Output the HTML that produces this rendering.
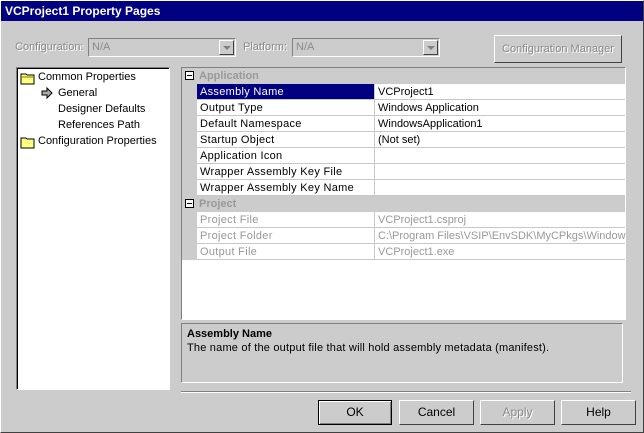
<!DOCTYPE html>
<html><head><style>
*{margin:0;padding:0;box-sizing:border-box}
body{width:644px;height:433px;background:#cccccc;font-family:"Liberation Sans",sans-serif;font-size:11px;position:relative;overflow:hidden;border:1px solid #fff;border-right-color:#404040;border-bottom-color:#404040}
.a{position:absolute}
.title{left:0;top:0;width:642px;height:20px;background:#000080;color:#fff;font-weight:bold;font-size:12px;line-height:20px;padding-left:4px}
.dis{color:#8a8a8a;text-shadow:1px 1px 0 #fff}
.combo{height:19px;border:1px solid;border-color:#808080 #fff #fff #808080;background:#cccccc;color:#8a8a8a;padding-left:3px;line-height:17px}
.combo i{position:absolute;right:1px;top:1px;width:15px;height:15px;border:1px solid;border-color:#fff #404040 #404040 #fff;background:#ccc}
.combo i:after{content:"";position:absolute;left:3px;top:5px;border:4px solid transparent;border-top:4px solid #808080;border-bottom:0}
.btn{height:25px;border:1px solid;border-color:#fff #404040 #404040 #fff;text-align:center;line-height:23px;font-size:12px}
.sunk{border:1px solid;border-color:#808080 #fff #fff #808080;background:#fff}
.row{position:absolute;left:15px;width:428px;height:16px;border-bottom:1px solid #c8c8c8;line-height:16px}
.row .n{position:absolute;left:0;width:178px;height:15px;padding-left:3px;border-right:1px solid #c8c8c8;letter-spacing:.3px}
.row .v{position:absolute;left:178px;padding-left:3px}
.hdr{position:absolute;left:0;width:443px;height:16px;background:#cccccc;line-height:16px}
.hdr b{position:absolute;left:17px;color:#999;font-size:11px}
.hdr i{position:absolute;left:3px;top:3px;width:9px;height:9px;border:1px solid #000;background:#fff}
.hdr i:after{content:"";position:absolute;left:1px;top:3px;width:5px;height:1px;background:#000}
.g{color:#999}
</style></head><body>
<div class="a title">VCProject1 Property Pages</div>
<div class="a dis" style="left:14px;top:40px">Configuration:</div>
<div class="a combo" style="left:87px;top:37px;width:148px">N/A<i></i></div>
<div class="a dis" style="left:242px;top:40px">Platform:</div>
<div class="a combo" style="left:291px;top:37px;width:148px">N/A<i></i></div>
<div class="a btn dis" style="left:493px;top:34px;width:128px;height:28px;line-height:26px;font-size:11px">Configuration Manager</div>

<div class="a sunk" style="left:15px;top:66px;width:154px;height:323px;border-color:#808080 #fff #fff #808080;box-shadow:inset 1px 1px 0 #000">
 <svg class="a" style="left:3px;top:3px" width="16" height="14"><path d="M1 3h5l1 1h7v9H1z" fill="#ffff80" stroke="#000"/><path d="M1 6h13" stroke="#808000"/></svg>
 <div class="a" style="left:21px;top:3px">Common Properties</div>
 <svg class="a" style="left:24px;top:19px" width="12" height="12"><path d="M1 4h5V1l5 5-5 5V8H1z" fill="#aaa" stroke="#000"/></svg>
 <div class="a" style="left:41px;top:19px">General</div>
 <div class="a" style="left:41px;top:35px">Designer Defaults</div>
 <div class="a" style="left:41px;top:51px">References Path</div>
 <svg class="a" style="left:3px;top:67px" width="16" height="14"><path d="M1 3h5l1 1h7v9H1z" fill="#ffff80" stroke="#000"/></svg>
 <div class="a" style="left:21px;top:67px">Configuration Properties</div>
</div>

<div class="a sunk" style="left:180px;top:66px;width:445px;height:253px">
 <div class="a" style="left:0;top:0;width:15px;height:192px;background:#cccccc"></div>
 <div class="hdr" style="top:0"><i></i><b>Application</b></div>
 <div class="row" style="top:16px"><div class="n" style="background:#000080;color:#fff">Assembly Name</div><div class="v">VCProject1</div></div>
 <div class="row" style="top:32px"><div class="n">Output Type</div><div class="v">Windows Application</div></div>
 <div class="row" style="top:48px"><div class="n">Default Namespace</div><div class="v">WindowsApplication1</div></div>
 <div class="row" style="top:64px"><div class="n">Startup Object</div><div class="v">(Not set)</div></div>
 <div class="row" style="top:80px"><div class="n">Application Icon</div><div class="v"></div></div>
 <div class="row" style="top:96px"><div class="n">Wrapper Assembly Key File</div><div class="v"></div></div>
 <div class="row" style="top:112px"><div class="n">Wrapper Assembly Key Name</div><div class="v"></div></div>
 <div class="hdr" style="top:128px"><i></i><b>Project</b></div>
 <div class="row g" style="top:144px"><div class="n">Project File</div><div class="v">VCProject1.csproj</div></div>
 <div class="row g" style="top:160px"><div class="n">Project Folder</div><div class="v" style="white-space:nowrap">C:\Program Files\VSIP\EnvSDK\MyCPkgs\Window</div></div>
 <div class="row g" style="top:176px"><div class="n">Output File</div><div class="v">VCProject1.exe</div></div>
</div>

<div class="a" style="left:180px;top:322px;width:442px;height:60px;border:1px solid;border-color:#808080 #fff #fff #808080">
 <div class="a" style="left:5px;top:4px;font-weight:bold">Assembly Name</div>
 <div class="a" style="left:5px;top:18px;letter-spacing:.2px">The name of the output file that will hold assembly metadata (manifest).</div>
</div>
<div class="a" style="left:180px;top:390px;width:450px;height:2px;border-top:1px solid #808080;border-bottom:1px solid #fff"></div>

<div class="a btn" style="left:317px;top:399px;width:74px;border:1px solid #000;box-shadow:inset 1px 1px 0 #fff,inset -1px -1px 0 #808080">OK</div>
<div class="a btn" style="left:398px;top:399px;width:75px">Cancel</div>
<div class="a btn dis" style="left:479px;top:399px;width:75px">Apply</div>
<div class="a btn" style="left:560px;top:399px;width:75px">Help</div>
</body></html>
